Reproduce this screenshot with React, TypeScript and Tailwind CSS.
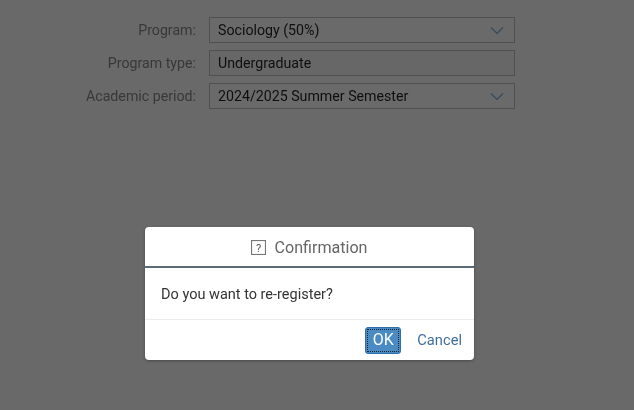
import React from "react";

function Chevron() {
  return (
    <svg width="14" height="9" viewBox="0 0 14 9" fill="none" className="shrink-0">
      <path d="M1 1.5 L7 7.5 L13 1.5" stroke="#34495c" strokeWidth="1.1" />
    </svg>
  );
}

function Row({ label, value, select }: { label: string; value: string; select?: boolean }) {
  return (
    <div className="flex items-center h-[26px]">
      <div className="w-[196px] pt-[1px] text-right text-[14.2px] text-[#383838]">{label}</div>
      <div className={`ml-[13px] w-[306px] h-[26px] border border-[#505050] flex items-center justify-between pl-[8px] pr-[10px] text-[14.2px] text-[#0f0f0f] ${select ? "bg-[#6a6a6a]" : "bg-[#676767]"}`}>
        <span className="pt-[1px]">{value}</span>
        {select && <Chevron />}
      </div>
    </div>
  );
}

export default function App() {
  return (
    <div className="relative w-[634px] h-[410px] overflow-hidden bg-[#696969] blur-[0.3px] font-['Roboto','Liberation_Sans',sans-serif]">
      <div className="flex flex-col gap-[7px] pt-[17px]">
        <Row label="Program:" value="Sociology (50%)" select />
        <Row label="Program type:" value="Undergraduate" />
        <Row label="Academic period:" value="2024/2025 Summer Semester" select />
      </div>

      <div className="absolute left-[145px] top-[227px] w-[329px] h-[133px] bg-white rounded-[4px] flex flex-col overflow-hidden shadow-[0_1px_3px_rgba(0,0,0,0.3)]">
        <div className="h-[41px] shrink-0 border-b-2 border-[#5b6a75] flex items-center justify-center gap-[8px] text-[#666666]">
          <svg width="15" height="15" viewBox="0 0 15 15" className="shrink-0 mt-[2px]">
            <rect x="0.5" y="0.5" width="14" height="14" fill="none" stroke="#777777" strokeWidth="1.2" />
            <text x="7.5" y="11.5" textAnchor="middle" fontSize="11" fill="#555555" fontFamily="Roboto,sans-serif">?</text>
          </svg>
          <span className="text-[16.1px] pt-[4px]">Confirmation</span>
        </div>
        <div className="h-[52px] shrink-0 border-b border-[#ececec] flex items-center pl-[16px] pt-[3px] text-[14.5px] text-[#333333]">
          Do you want to re-register?
        </div>
        <div className="flex-1 flex items-center justify-end pr-[12px]">
          <button className="w-[36px] h-[27px] bg-[#4a8bc4] border border-[#2f6fa8] rounded-[3px] outline-1 outline-dotted outline-offset-[-3px] outline-[#123] text-white text-[16px] font-normal flex items-center justify-center">
            OK
          </button>
          <span className="ml-[16px] text-[14.7px] text-[#3f6f9b]">Cancel</span>
        </div>
      </div>
    </div>
  );
}
